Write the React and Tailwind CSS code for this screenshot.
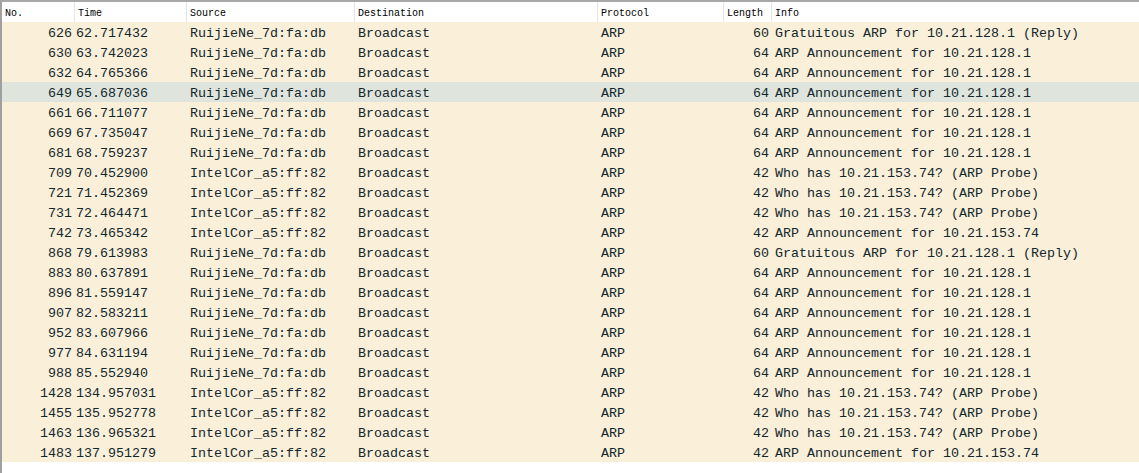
const packets = [
  ["626", "62.717432", "RuijieNe_7d:fa:db", "60", "Gratuitous ARP for 10.21.128.1 (Reply)"],
  ["630", "63.742023", "RuijieNe_7d:fa:db", "64", "ARP Announcement for 10.21.128.1"],
  ["632", "64.765366", "RuijieNe_7d:fa:db", "64", "ARP Announcement for 10.21.128.1"],
  ["649", "65.687036", "RuijieNe_7d:fa:db", "64", "ARP Announcement for 10.21.128.1"],
  ["661", "66.711077", "RuijieNe_7d:fa:db", "64", "ARP Announcement for 10.21.128.1"],
  ["669", "67.735047", "RuijieNe_7d:fa:db", "64", "ARP Announcement for 10.21.128.1"],
  ["681", "68.759237", "RuijieNe_7d:fa:db", "64", "ARP Announcement for 10.21.128.1"],
  ["709", "70.452900", "IntelCor_a5:ff:82", "42", "Who has 10.21.153.74? (ARP Probe)"],
  ["721", "71.452369", "IntelCor_a5:ff:82", "42", "Who has 10.21.153.74? (ARP Probe)"],
  ["731", "72.464471", "IntelCor_a5:ff:82", "42", "Who has 10.21.153.74? (ARP Probe)"],
  ["742", "73.465342", "IntelCor_a5:ff:82", "42", "ARP Announcement for 10.21.153.74"],
  ["868", "79.613983", "RuijieNe_7d:fa:db", "60", "Gratuitous ARP for 10.21.128.1 (Reply)"],
  ["883", "80.637891", "RuijieNe_7d:fa:db", "64", "ARP Announcement for 10.21.128.1"],
  ["896", "81.559147", "RuijieNe_7d:fa:db", "64", "ARP Announcement for 10.21.128.1"],
  ["907", "82.583211", "RuijieNe_7d:fa:db", "64", "ARP Announcement for 10.21.128.1"],
  ["952", "83.607966", "RuijieNe_7d:fa:db", "64", "ARP Announcement for 10.21.128.1"],
  ["977", "84.631194", "RuijieNe_7d:fa:db", "64", "ARP Announcement for 10.21.128.1"],
  ["988", "85.552940", "RuijieNe_7d:fa:db", "64", "ARP Announcement for 10.21.128.1"],
  ["1428", "134.957031", "IntelCor_a5:ff:82", "42", "Who has 10.21.153.74? (ARP Probe)"],
  ["1455", "135.952778", "IntelCor_a5:ff:82", "42", "Who has 10.21.153.74? (ARP Probe)"],
  ["1463", "136.965321", "IntelCor_a5:ff:82", "42", "Who has 10.21.153.74? (ARP Probe)"],
  ["1483", "137.951279", "IntelCor_a5:ff:82", "42", "ARP Announcement for 10.21.153.74"],
];

const headers = [
  ["No.", "w-[72px]"],
  ["Time", "w-[112px] border-l border-[#e5e5e5]"],
  ["Source", "w-[168px] border-l border-[#e5e5e5]"],
  ["Destination", "w-[243px] border-l border-[#e5e5e5]"],
  ["Protocol", "w-[126px] border-l border-[#e5e5e5]"],
  ["Length", "w-[48px] border-l border-[#e5e5e5]"],
  ["Info", "flex-1 border-l border-[#e5e5e5]"],
];

export default function App() {
  return (
    <div className="w-[1139px] h-[473px] bg-white border-t-2 border-t-[#a8a8a8] border-l-2 border-l-[#a0a0a0] overflow-hidden">
      {/* column headers */}
      <div className="flex h-[20px] bg-white text-[10px] text-black font-['Liberation_Mono',monospace]">
        {headers.map(([label, cls]) => (
          <div key={label} className={`${cls} shrink-0 flex items-center px-[3px] pt-[2px]`}>
            {label}
          </div>
        ))}
      </div>

      {/* packet rows */}
      <div className="font-['Liberation_Mono',monospace] text-[13.33px] text-[#12272e]">
        {packets.map(([no, time, src, len, info]) => (
          <div
            key={no}
            className={`flex h-[20px] items-center pt-[3px] whitespace-pre ${no === "649" ? "bg-[#dfe5dc]" : "bg-[#faefd8]"}`}
          >
            <div className="w-[72px] shrink-0 text-right pr-[2px]">{no}</div>
            <div className="w-[112px] shrink-0 pl-[2px]">{time}</div>
            <div className="w-[168px] shrink-0 pl-[4px]">{src}</div>
            <div className="w-[243px] shrink-0 pl-[4px]">Broadcast</div>
            <div className="w-[126px] shrink-0 pl-[4px]">ARP</div>
            <div className="w-[48px] shrink-0 text-right pr-[2px]">{len}</div>
            <div className="flex-1 pl-[4px]">{info}</div>
          </div>
        ))}
      </div>
    </div>
  );
}
